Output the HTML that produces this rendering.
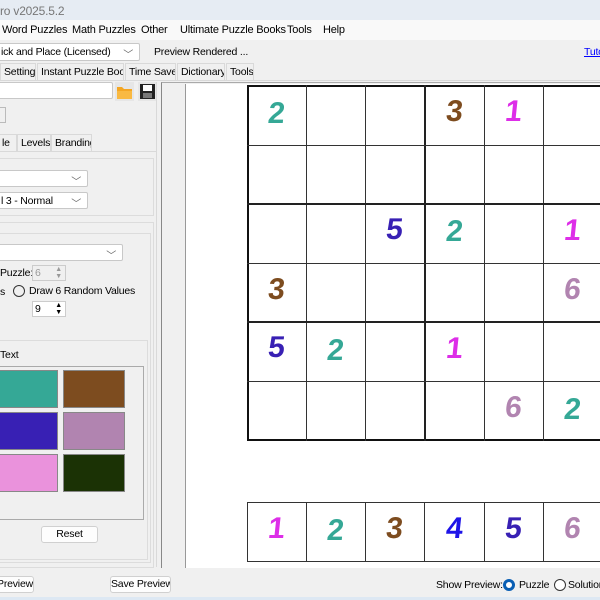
<!DOCTYPE html><html><head><style>
*{margin:0;padding:0;box-sizing:border-box}
body{width:600px;height:600px;overflow:hidden;background:#f0f0f0;font-family:"Liberation Sans",sans-serif;font-size:10.5px;letter-spacing:-0.2px;color:#000;position:relative;white-space:nowrap}
.a{position:absolute}
.box{position:absolute;background:#fff;border:1px solid #c8c8c8;border-radius:2px;overflow:hidden}
.chev{position:absolute;right:6px;top:2px;color:#666;font-size:10px}
.tab{position:absolute;top:0;height:17px;border:1px solid #d9d9d9;border-bottom:none;padding:2px 3px;background:#f0f0f0;overflow:hidden}
.gb{position:absolute;border:1px solid #dcdcdc}
.sw{position:absolute;border:1px solid #888}
.btn{position:absolute;background:#fdfdfd;border:1px solid #d0d0d0;border-radius:3px;text-align:center;line-height:15px;overflow:hidden}
.d{position:absolute;width:59px;text-align:center;font:bold 30px "Liberation Sans",sans-serif;letter-spacing:0;transform:skewX(-6deg)}
.v{position:absolute;background:#222;width:2px}
.h{position:absolute;background:#222;height:2px}
.m{position:absolute;top:24px;font-size:11px}
</style></head><body>
<div class="a" style="left:0;top:0;width:600px;height:20px;background:#e6ecf3"></div>
<div class="a" style="left:0;top:4px;color:#777;font-size:12px">ro v2025.5.2</div>
<div class="a" style="left:0;top:20px;width:600px;height:20px;background:#f9f9f9"></div>
<div class="m" style="left:2px">Word Puzzles</div>
<div class="m" style="left:72px">Math Puzzles</div>
<div class="m" style="left:141px">Other</div>
<div class="m" style="left:180px">Ultimate Puzzle Books</div>
<div class="m" style="left:287px">Tools</div>
<div class="m" style="left:323px">Help</div>
<div class="box" style="left:-2px;top:43px;width:142px;height:18px;padding:2px 0 0 2px">ick and Place (Licensed)<span class="chev">﹀</span></div>
<div class="a" style="left:154px;top:46px">Preview Rendered ...</div>
<div class="a" style="left:584px;top:46px;color:#00f;text-decoration:underline">Tuto</div>
<div class="a" style="left:0;top:63px;width:600px;height:17px">
<div class="tab" style="left:0;width:36px">Settings</div>
<div class="tab" style="left:37px;width:87px">Instant Puzzle Books</div>
<div class="tab" style="left:125px;width:51px">Time Saver</div>
<div class="tab" style="left:177px;width:48px">Dictionary</div>
<div class="tab" style="left:226px;width:28px">Tools</div></div>
<div class="a" style="left:0;top:80px;width:600px;height:1px;background:#d9d9d9"></div>
<div class="box" style="left:-2px;top:82px;width:115px;height:17px"></div>
<svg class="a" style="left:115px;top:82px" width="19" height="19"><rect x="0" y="0" width="19" height="19" fill="#e6e6e6"/><path d="M2 5h5l2 2h8v10H2z" fill="#f4a623"/><path d="M2 9h15v8H2z" fill="#f9b942"/></svg>
<svg class="a" style="left:138px;top:82px" width="19" height="19"><rect width="19" height="19" fill="#e6e6e6"/><rect x="2" y="2" width="15" height="15" fill="#222"/><rect x="5" y="3" width="9" height="6" fill="#fff"/><rect x="5" y="11" width="9" height="5" fill="#777"/></svg>
<div class="a" style="left:-1px;top:107px;width:7px;height:16px;border:1px solid #bbb"></div>
<div class="tab" style="left:-2px;top:134px;width:19px">le</div>
<div class="tab" style="left:17px;top:134px;width:34px">Levels</div>
<div class="tab" style="left:51px;top:134px;width:41px">Branding</div>
<div class="a" style="left:0;top:151px;width:157px;height:1px;background:#d9d9d9"></div>
<div class="a" style="left:156px;top:82px;width:1px;height:485px;background:#d9d9d9"></div>
<div class="gb" style="left:-2px;top:158px;width:156px;height:58px"></div>
<div class="box" style="left:-2px;top:170px;width:90px;height:17px"><span class="chev">﹀</span></div>
<div class="box" style="left:-2px;top:192px;width:90px;height:17px;padding:2px 0 0 2px">l 3 - Normal<span class="chev">﹀</span></div>
<div class="gb" style="left:-2px;top:222px;width:156px;height:346px"></div>
<div class="gb" style="left:-2px;top:233px;width:153px;height:330px"></div>
<div class="box" style="left:-2px;top:244px;width:125px;height:17px"><span class="chev">﹀</span></div>
<div class="a" style="left:0;top:267px">Puzzle:</div>
<div class="a" style="left:32px;top:265px;width:34px;height:16px;border:1px solid #ccc;color:#999;padding:1px 2px">6<span style="position:absolute;right:3px;top:0;font-size:7px;line-height:7px">▲<br>▼</span></div>
<div class="a" style="left:0;top:286px">s</div>
<div class="a" style="left:13px;top:285px;width:12px;height:12px;border:1px solid #333;border-radius:50%"></div>
<div class="a" style="left:29px;top:285px">Draw 6 Random Values</div>
<div class="a" style="left:32px;top:301px;width:34px;height:16px;border:1px solid #ccc;background:#fff;padding:1px 2px">9<span style="position:absolute;right:3px;top:0;font-size:7px;line-height:7px">▲<br>▼</span></div>
<div class="gb" style="left:-2px;top:340px;width:150px;height:220px"></div>
<div class="a" style="left:0;top:349px">Text</div>
<div class="a" style="left:-2px;top:366px;width:146px;height:154px;border:1px solid #aaa;border-left:none"></div>
<div class="sw" style="left:-2px;top:370px;width:60px;height:38px;background:#35a896"></div>
<div class="sw" style="left:63px;top:370px;width:62px;height:38px;background:#7d4c1f"></div>
<div class="sw" style="left:-2px;top:412px;width:60px;height:38px;background:#3820b4"></div>
<div class="sw" style="left:63px;top:412px;width:62px;height:38px;background:#b184b0"></div>
<div class="sw" style="left:-2px;top:454px;width:60px;height:38px;background:#ea92dc"></div>
<div class="sw" style="left:63px;top:454px;width:62px;height:38px;background:#1b3205"></div>
<div class="btn" style="left:41px;top:526px;width:57px;height:17px">Reset</div>
<div class="a" style="left:161px;top:82px;width:439px;height:486px;background:#f0f0f0;border-left:1px solid #888;border-top:1px solid #aaa"></div>
<div class="a" style="left:185px;top:84px;width:415px;height:484px;background:#fff;border-left:1px solid #999"></div>
<div class="a" style="left:247px;top:85px;width:360px;height:356px;border:2px solid #111"></div>
<div class="a" style="left:247px;top:502px;width:360px;height:60px;border:1px solid #333"></div>
<div class="d" style="left:247px;top:97px;color:#35a896">2</div>
<div class="d" style="left:425px;top:95px;color:#7d4c1f">3</div>
<div class="d" style="left:484px;top:95px;color:#dd2ee8">1</div>
<div class="d" style="left:365px;top:213px;color:#3820b4">5</div>
<div class="d" style="left:425px;top:215px;color:#35a896">2</div>
<div class="d" style="left:543px;top:214px;color:#dd2ee8">1</div>
<div class="d" style="left:247px;top:273px;color:#7d4c1f">3</div>
<div class="d" style="left:543px;top:273px;color:#b184b0">6</div>
<div class="d" style="left:247px;top:331px;color:#3820b4">5</div>
<div class="d" style="left:306px;top:334px;color:#35a896">2</div>
<div class="d" style="left:425px;top:332px;color:#dd2ee8">1</div>
<div class="d" style="left:484px;top:391px;color:#b184b0">6</div>
<div class="d" style="left:543px;top:393px;color:#35a896">2</div>
<div class="d" style="left:247px;top:512px;color:#dd2ee8">1</div>
<div class="d" style="left:306px;top:514px;color:#35a896">2</div>
<div class="d" style="left:365px;top:512px;color:#7d4c1f">3</div>
<div class="d" style="left:425px;top:512px;color:#1e14e8">4</div>
<div class="d" style="left:484px;top:512px;color:#3820b4">5</div>
<div class="d" style="left:543px;top:512px;color:#b184b0">6</div>
<div class="a" style="left:306px;top:85px;width:1px;height:356px;background:#333"></div>
<div class="a" style="left:365px;top:85px;width:1px;height:356px;background:#333"></div>
<div class="v" style="left:424px;top:85px;height:356px"></div>
<div class="a" style="left:484px;top:85px;width:1px;height:356px;background:#333"></div>
<div class="a" style="left:543px;top:85px;width:1px;height:356px;background:#333"></div>
<div class="a" style="left:247px;top:145px;width:360px;height:1px;background:#333"></div>
<div class="h" style="left:247px;top:203px;width:360px"></div>
<div class="a" style="left:247px;top:263px;width:360px;height:1px;background:#333"></div>
<div class="h" style="left:247px;top:321px;width:360px"></div>
<div class="a" style="left:247px;top:381px;width:360px;height:1px;background:#333"></div>
<div class="a" style="left:306px;top:502px;width:1px;height:60px;background:#333"></div>
<div class="a" style="left:365px;top:502px;width:1px;height:60px;background:#333"></div>
<div class="a" style="left:424px;top:502px;width:1px;height:60px;background:#333"></div>
<div class="a" style="left:484px;top:502px;width:1px;height:60px;background:#333"></div>
<div class="a" style="left:543px;top:502px;width:1px;height:60px;background:#333"></div>
<div class="btn" style="left:-4px;top:576px;width:38px;height:17px">Preview</div>
<div class="btn" style="left:110px;top:576px;width:61px;height:17px">Save Preview</div>
<div class="a" style="left:436px;top:579px">Show Preview:</div>
<div class="a" style="left:503px;top:579px;width:12px;height:12px;border:3px solid #0a5fb4;border-radius:50%;background:#fff"></div>
<div class="a" style="left:519px;top:579px">Puzzle</div>
<div class="a" style="left:554px;top:579px;width:12px;height:12px;border:1px solid #333;border-radius:50%;background:#fff"></div>
<div class="a" style="left:568px;top:579px">Solution</div>
<div class="a" style="left:0;top:597px;width:600px;height:3px;background:#dde8f3"></div>
</body></html>
